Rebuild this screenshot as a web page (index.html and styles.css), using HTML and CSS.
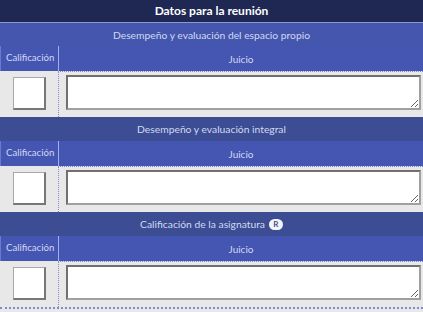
FILE: index.html
```html
<!DOCTYPE html>
<html>
<head>
<meta charset="UTF-8">
<title>Datos para la reunión</title>
<link rel="stylesheet" href="styles.css">
</head>
<body>
  <div class="panel">
    <div class="titulo">Datos para la reunión</div>

    <div class="seccion">
      <div class="cabecera primera">Desempeño y evaluación del espacio propio</div>
      <div class="fila columnas">
        <div class="col-cal">Calificación</div>
        <div class="col-juicio">Juicio</div>
      </div>
      <div class="fila cuerpo">
        <div class="celda-cal"><input class="nota" type="text"></div>
        <div class="celda-juicio"><textarea class="texto"></textarea></div>
      </div>
    </div>

    <div class="seccion">
      <div class="cabecera">Desempeño y evaluación integral</div>
      <div class="fila columnas">
        <div class="col-cal">Calificación</div>
        <div class="col-juicio">Juicio</div>
      </div>
      <div class="fila cuerpo">
        <div class="celda-cal"><input class="nota" type="text"></div>
        <div class="celda-juicio"><textarea class="texto"></textarea></div>
      </div>
    </div>

    <div class="seccion ultima">
      <div class="cabecera">Calificación de la asignatura <span class="badge">R</span></div>
      <div class="fila columnas">
        <div class="col-cal">Calificación</div>
        <div class="col-juicio">Juicio</div>
      </div>
      <div class="fila cuerpo">
        <div class="celda-cal"><input class="nota" type="text"></div>
        <div class="celda-juicio"><textarea class="texto"></textarea></div>
      </div>
    </div>
  </div>
</body>
</html>
```

FILE: styles.css
```css
body {
  margin: 0;
  background: #e8e8e8;
  font-family: "Lato", "Roboto", sans-serif;
}

.titulo {
  height: 22px;
  line-height: 22px;
  background: #1f2753;
  border-bottom: 1px solid #8d97cf;
  color: #ffffff;
  font-size: 12px;
  font-weight: bold;
  text-align: center;
}

.cabecera {
  height: 24px;
  background: #3c4d94;
  color: #d3d8f2;
  font-size: 10.3px;
  display: flex;
  align-items: center;
  justify-content: center;
  gap: 4px;
}
.cabecera.primera {
  height: 23px;
  background: #4456ad;
}

.badge {
  display: inline-flex;
  align-items: center;
  justify-content: center;
  width: 14px;
  height: 11px;
  border-radius: 6px;
  background: #f4f5fb;
  color: #3c4d94;
  font-size: 8px;
  font-weight: bold;
}

.fila {
  display: grid;
  grid-template-columns: 58px 1fr;
}

.columnas {
  height: 25px;
  background: #4456b1;
  color: #d3d8f2;
  font-size: 10px;
}
.col-cal {
  padding: 6px 0 0 5px;
  font-size: 9.6px;
  border-left: 1px solid #6a7bcc;
}
.col-juicio {
  border-left: 1px solid #a5afe8;
  text-align: center;
  padding-top: 7px;
}

.cuerpo {
  height: 46px;
  background: #e8e8e8;
}
.celda-cal {
  padding: 6px 0 0 13px;
}
.celda-juicio {
  border-left: 1px dotted #7d8bd2;
  border-top: 1px dotted #7d8bd2;
  padding: 3px 2px 0 7px;
}

.nota {
  box-sizing: border-box;
  width: 33px;
  height: 33px;
  margin: 0;
  background: #ffffff;
  border: 1px solid #a8a8a8;
  border-right: 2px solid #777777;
  border-bottom: 2px solid #777777;
  border-radius: 0;
}

.texto {
  box-sizing: border-box;
  display: block;
  width: 100%;
  height: 35px;
  margin: 0;
  background: #ffffff;
  border: 2px solid #a0a0a0;
  border-top-color: #707070;
  border-left-color: #707070;
  border-radius: 0;
}

.ultima {
  border-bottom: 2px dotted #7d8bd2;
}
```
